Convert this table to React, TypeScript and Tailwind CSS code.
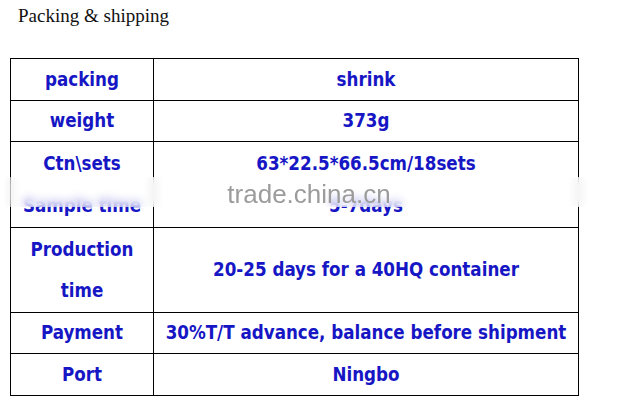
import React from "react";

export default function App() {
  const cell = "border border-black text-center align-middle p-0 whitespace-nowrap";
  const txt =
    "font-['DejaVu_Sans_Condensed','DejaVu_Sans',sans-serif] [font-stretch:semi-condensed] font-bold text-[18.6px] text-[#1616c4]";
  return (
    <div className="relative w-[618px] h-[405px] bg-white overflow-hidden">
      <div className="pl-[18px] pt-[3px] h-[58px] font-['Liberation_Serif',serif] text-[19px] text-[#111] leading-[26px]">
        Packing &amp; shipping
      </div>
      <table className="ml-[10px] border-collapse">
        <tbody className={txt}>
          <tr>
            <td className={`${cell} w-[143px] h-[42px]`}>packing</td>
            <td className={`${cell} w-[425px]`}>shrink</td>
          </tr>
          <tr>
            <td className={`${cell} h-[41px]`}>weight</td>
            <td className={cell}>373g</td>
          </tr>
          <tr>
            <td className={`${cell} h-[86px]`}>
              <div className="leading-[42px]">Ctn\sets</div>
              <div className="leading-[42px]">Sample time</div>
            </td>
            <td className={cell}>
              <div className="leading-[42px]">63*22.5*66.5cm/18sets</div>
              <div className="leading-[42px]">5-7days</div>
            </td>
          </tr>
          <tr>
            <td className={`${cell} h-[85px]`}>
              <div className="leading-[41px]">Production</div>
              <div className="leading-[41px]">time</div>
            </td>
            <td className={cell}>20-25 days for a 40HQ container</td>
          </tr>
          <tr>
            <td className={`${cell} h-[41px]`}>Payment</td>
            <td className={cell}>30%T/T advance, balance before shipment</td>
          </tr>
          <tr>
            <td className={`${cell} h-[42px]`}>Port</td>
            <td className={cell}>Ningbo</td>
          </tr>
        </tbody>
      </table>
      <div className="absolute left-[3px] top-[177px] w-[612px] h-[30px] bg-white/60 backdrop-blur-[4px] [mask-image:linear-gradient(to_right,transparent,black_12px,black_calc(100%-12px),transparent)]" />
      <div className="absolute left-0 right-0 top-[178px] text-center font-['Liberation_Sans',sans-serif] text-[26px] leading-[32px] text-[#9c9c9c]">
        trade.china.cn
      </div>
    </div>
  );
}
